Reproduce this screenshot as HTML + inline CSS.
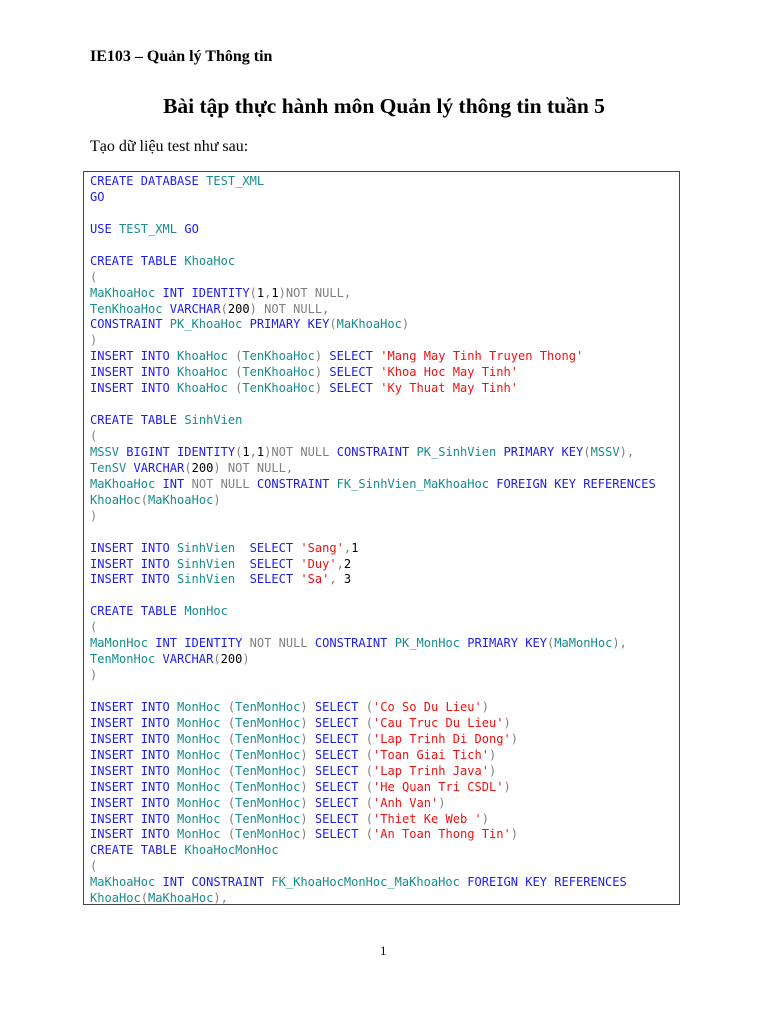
<!DOCTYPE html>
<html><head><meta charset="utf-8"><style>
body{margin:0;background:#fff;width:768px;height:1024px;position:relative;overflow:hidden}
.h1{position:absolute;left:90px;top:48px;font:bold 16px "Liberation Serif",serif;color:#000}
.h2{position:absolute;left:0;width:768px;text-align:center;top:94px;font:bold 21.5px "Liberation Serif",serif;color:#000}
.p{position:absolute;left:90px;top:138px;font:16px "Liberation Serif",serif;color:#000}
.box{position:absolute;left:83px;top:171px;width:597px;height:734px;border:1px solid #444;box-sizing:border-box}
pre{position:absolute;left:90px;top:174px;margin:0;font:12.05px/15.93px "DejaVu Sans Mono","Liberation Mono",monospace;color:#000}
.k{color:#1c1cee}.t{color:#168c8c}.g{color:#808080}.s{color:#f01010}
.pn{position:absolute;left:380px;top:943px;font:13px "Liberation Serif",serif}
</style></head><body>
<div class="h1">IE103 – Quản lý Thông tin</div>
<div class="h2">Bài tập thực hành môn Quản lý thông tin tuần 5</div>
<div class="p">Tạo dữ liệu test như sau:</div>
<div class="box"></div>
<pre><span class="k">CREATE DATABASE</span> <span class="t">TEST_XML</span>
<span class="k">GO</span>

<span class="k">USE</span> <span class="t">TEST_XML</span> <span class="k">GO</span>

<span class="k">CREATE TABLE</span> <span class="t">KhoaHoc</span>
<span class="g">(</span>
<span class="t">MaKhoaHoc</span> <span class="k">INT IDENTITY</span><span class="g">(</span>1<span class="g">,</span>1<span class="g">)NOT NULL,</span>
<span class="t">TenKhoaHoc</span> <span class="k">VARCHAR</span><span class="g">(</span>200<span class="g">) NOT NULL,</span>
<span class="k">CONSTRAINT</span> <span class="t">PK_KhoaHoc</span> <span class="k">PRIMARY KEY</span><span class="g">(</span><span class="t">MaKhoaHoc</span><span class="g">)</span>
<span class="g">)</span>
<span class="k">INSERT INTO</span> <span class="t">KhoaHoc</span> <span class="g">(</span><span class="t">TenKhoaHoc</span><span class="g">)</span> <span class="k">SELECT</span> <span class="s">'Mang May Tinh Truyen Thong'</span>
<span class="k">INSERT INTO</span> <span class="t">KhoaHoc</span> <span class="g">(</span><span class="t">TenKhoaHoc</span><span class="g">)</span> <span class="k">SELECT</span> <span class="s">'Khoa Hoc May Tinh'</span>
<span class="k">INSERT INTO</span> <span class="t">KhoaHoc</span> <span class="g">(</span><span class="t">TenKhoaHoc</span><span class="g">)</span> <span class="k">SELECT</span> <span class="s">'Ky Thuat May Tinh'</span>

<span class="k">CREATE TABLE</span> <span class="t">SinhVien</span>
<span class="g">(</span>
<span class="t">MSSV</span> <span class="k">BIGINT IDENTITY</span><span class="g">(</span>1<span class="g">,</span>1<span class="g">)NOT NULL</span> <span class="k">CONSTRAINT</span> <span class="t">PK_SinhVien</span> <span class="k">PRIMARY KEY</span><span class="g">(</span><span class="t">MSSV</span><span class="g">),</span>
<span class="t">TenSV</span> <span class="k">VARCHAR</span><span class="g">(</span>200<span class="g">) NOT NULL,</span>
<span class="t">MaKhoaHoc</span> <span class="k">INT</span> <span class="g">NOT NULL</span> <span class="k">CONSTRAINT</span> <span class="t">FK_SinhVien_MaKhoaHoc</span> <span class="k">FOREIGN KEY REFERENCES</span>
<span class="t">KhoaHoc</span><span class="g">(</span><span class="t">MaKhoaHoc</span><span class="g">)</span>
<span class="g">)</span>

<span class="k">INSERT INTO</span> <span class="t">SinhVien</span>  <span class="k">SELECT</span> <span class="s">'Sang'</span><span class="g">,</span>1
<span class="k">INSERT INTO</span> <span class="t">SinhVien</span>  <span class="k">SELECT</span> <span class="s">'Duy'</span><span class="g">,</span>2
<span class="k">INSERT INTO</span> <span class="t">SinhVien</span>  <span class="k">SELECT</span> <span class="s">'Sa'</span><span class="g">,</span> 3

<span class="k">CREATE TABLE</span> <span class="t">MonHoc</span>
<span class="g">(</span>
<span class="t">MaMonHoc</span> <span class="k">INT IDENTITY</span> <span class="g">NOT NULL</span> <span class="k">CONSTRAINT</span> <span class="t">PK_MonHoc</span> <span class="k">PRIMARY KEY</span><span class="g">(</span><span class="t">MaMonHoc</span><span class="g">),</span>
<span class="t">TenMonHoc</span> <span class="k">VARCHAR</span><span class="g">(</span>200<span class="g">)</span>
<span class="g">)</span>

<span class="k">INSERT INTO</span> <span class="t">MonHoc</span> <span class="g">(</span><span class="t">TenMonHoc</span><span class="g">)</span> <span class="k">SELECT</span> <span class="g">(</span><span class="s">'Co So Du Lieu'</span><span class="g">)</span>
<span class="k">INSERT INTO</span> <span class="t">MonHoc</span> <span class="g">(</span><span class="t">TenMonHoc</span><span class="g">)</span> <span class="k">SELECT</span> <span class="g">(</span><span class="s">'Cau Truc Du Lieu'</span><span class="g">)</span>
<span class="k">INSERT INTO</span> <span class="t">MonHoc</span> <span class="g">(</span><span class="t">TenMonHoc</span><span class="g">)</span> <span class="k">SELECT</span> <span class="g">(</span><span class="s">'Lap Trinh Di Dong'</span><span class="g">)</span>
<span class="k">INSERT INTO</span> <span class="t">MonHoc</span> <span class="g">(</span><span class="t">TenMonHoc</span><span class="g">)</span> <span class="k">SELECT</span> <span class="g">(</span><span class="s">'Toan Giai Tich'</span><span class="g">)</span>
<span class="k">INSERT INTO</span> <span class="t">MonHoc</span> <span class="g">(</span><span class="t">TenMonHoc</span><span class="g">)</span> <span class="k">SELECT</span> <span class="g">(</span><span class="s">'Lap Trinh Java'</span><span class="g">)</span>
<span class="k">INSERT INTO</span> <span class="t">MonHoc</span> <span class="g">(</span><span class="t">TenMonHoc</span><span class="g">)</span> <span class="k">SELECT</span> <span class="g">(</span><span class="s">'He Quan Tri CSDL'</span><span class="g">)</span>
<span class="k">INSERT INTO</span> <span class="t">MonHoc</span> <span class="g">(</span><span class="t">TenMonHoc</span><span class="g">)</span> <span class="k">SELECT</span> <span class="g">(</span><span class="s">'Anh Van'</span><span class="g">)</span>
<span class="k">INSERT INTO</span> <span class="t">MonHoc</span> <span class="g">(</span><span class="t">TenMonHoc</span><span class="g">)</span> <span class="k">SELECT</span> <span class="g">(</span><span class="s">'Thiet Ke Web '</span><span class="g">)</span>
<span class="k">INSERT INTO</span> <span class="t">MonHoc</span> <span class="g">(</span><span class="t">TenMonHoc</span><span class="g">)</span> <span class="k">SELECT</span> <span class="g">(</span><span class="s">'An Toan Thong Tin'</span><span class="g">)</span>
<span class="k">CREATE TABLE</span> <span class="t">KhoaHocMonHoc</span>
<span class="g">(</span>
<span class="t">MaKhoaHoc</span> <span class="k">INT CONSTRAINT</span> <span class="t">FK_KhoaHocMonHoc_MaKhoaHoc</span> <span class="k">FOREIGN KEY REFERENCES</span>
<span class="t">KhoaHoc</span><span class="g">(</span><span class="t">MaKhoaHoc</span><span class="g">),</span></pre>
<div class="pn">1</div>
</body></html>
